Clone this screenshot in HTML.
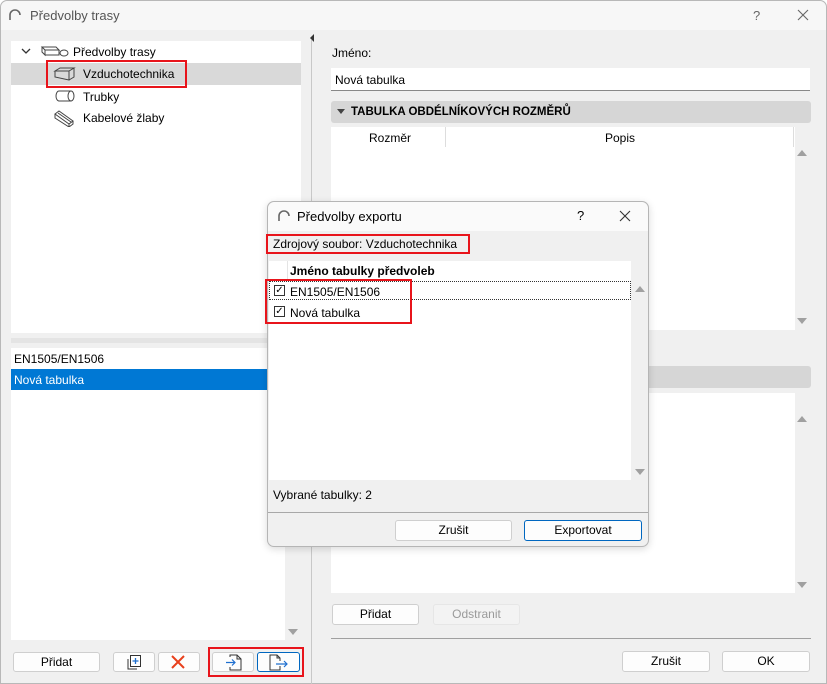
<!DOCTYPE html><html><head><meta charset="utf-8"><style>
*{box-sizing:border-box;margin:0;padding:0}
body{width:827px;height:684px;overflow:hidden;background:#fff;font-family:"Liberation Sans","DejaVu Sans",sans-serif;font-size:12px;color:#000;position:relative}
.a{position:absolute}
.win{left:0;top:0;width:827px;height:684px;background:#f0f0f0;border:1px solid #b8b8b8;border-radius:7px 7px 0 0}
.w{background:#fff}
.btn{position:absolute;background:#fdfdfd;border:1px solid #cfcfcf;border-radius:3px;text-align:center;font-size:12px;line-height:18px}
.red{position:absolute;border:2px solid #e8141b}
.t{position:absolute;white-space:nowrap}
.tri{position:absolute;width:0;height:0;border-left:5px solid transparent;border-right:5px solid transparent}
.up{border-bottom:6px solid #a0a0a0}
.dn{border-top:6px solid #a0a0a0}
.cb{position:absolute;width:11px;height:11px;border:1px solid #333;background:#fff;font-size:10px;line-height:9px;text-align:center;font-weight:bold}
</style></head><body>
<div class="a win"></div>
<div class="a" style="left:1px;top:1px;width:825px;height:29px;background:#f7f7f7;border-radius:7px 7px 0 0"></div>
<svg class="a" style="left:8px;top:8px" width="14" height="14"><path d="M2 12 V7 A5 5 0 0 1 12 7" fill="none" stroke="#666" stroke-width="1.6"/></svg>
<div class="t" style="left:30px;top:8px;font-size:13px;color:#555">Předvolby trasy</div>
<div class="t" style="left:753px;top:8px;font-size:13px;color:#666">?</div>
<svg class="a" style="left:797px;top:9px" width="12" height="12"><path d="M1 1L11 11M11 1L1 11" stroke="#666" stroke-width="1.1"/></svg>

<!-- left tree -->
<div class="a w" style="left:11px;top:41px;width:290px;height:292px"></div>
<div class="a" style="left:11px;top:63px;width:290px;height:22px;background:#d9d9d9"></div>
<svg class="a" style="left:21px;top:46px" width="10" height="10"><path d="M1 3L5 7L9 3" fill="none" stroke="#333" stroke-width="1.3"/></svg>
<svg class="a" style="left:40px;top:43px" width="30" height="16"><path d="M2 4h14l3 3h-14zM2 4v5l3 3V7M19 7v5H5" fill="none" stroke="#444"/><ellipse cx="24" cy="10" rx="4" ry="3" fill="none" stroke="#444"/></svg>
<div class="t" style="left:73px;top:45px">Předvolby trasy</div>
<svg class="a" style="left:53px;top:66px" width="24" height="16"><path d="M2 5l5-3h14l-5 3zM2 5v6l14 3V5M16 14l5-3V2" fill="none" stroke="#444"/></svg>
<div class="t" style="left:83px;top:67px">Vzduchotechnika</div>
<div class="red" style="left:46px;top:60px;width:141px;height:28px"></div>
<svg class="a" style="left:53px;top:88px" width="24" height="16"><path d="M6 3h12M6 13h12M6 3a3 5 0 0 0 0 10" fill="none" stroke="#444"/><ellipse cx="18" cy="8" rx="3" ry="5" fill="none" stroke="#444"/></svg>
<div class="t" style="left:83px;top:90px">Trubky</div>
<svg class="a" style="left:53px;top:109px" width="24" height="18"><path d="M2 5l4-3 14 10-4 3zM2 5v4l14 9v-3M20 12v3l-4 3M5 4l13 9" fill="none" stroke="#444"/></svg>
<div class="t" style="left:83px;top:111px">Kabelové žlaby</div>

<!-- splitter -->
<div class="a" style="left:11px;top:338px;width:290px;height:5px;background:#e4e4e4"></div>
<div class="a" style="left:311px;top:40px;width:1px;height:644px;background:#c8c8c8"></div>
<div class="tri" style="left:310px;top:34px;border:none;border-top:4px solid transparent;border-bottom:4px solid transparent;border-right:4px solid #333"></div>

<!-- left list -->
<div class="a w" style="left:11px;top:348px;width:274px;height:292px"></div>
<div class="t" style="left:14px;top:352px">EN1505/EN1506</div>
<div class="a" style="left:11px;top:369px;width:274px;height:21px;background:#0078d4"></div>
<div class="t" style="left:14px;top:373px;color:#fff">Nová tabulka</div>
<div class="tri dn" style="left:288px;top:629px"></div>

<div class="btn" style="left:13px;top:652px;width:87px;height:20px">Přidat</div>
<div class="btn" style="left:113px;top:652px;width:42px;height:20px"></div>
<svg class="a" style="left:126px;top:653px" width="16" height="18"><path d="M2 6v10h9" fill="none" stroke="#333"/><rect x="4.5" y="2.5" width="10" height="11" fill="#fff" stroke="#333"/><path d="M9.5 5v6M6.5 8h6" stroke="#1e6fd0" stroke-width="1.3"/></svg>
<div class="btn" style="left:158px;top:652px;width:42px;height:20px"></div>
<svg class="a" style="left:171px;top:655px" width="14" height="14"><path d="M1 1L13 13M13 1L1 13" stroke="#e8401c" stroke-width="2"/></svg>
<div class="btn" style="left:212px;top:652px;width:42px;height:20px"></div>
<svg class="a" style="left:225px;top:653px" width="18" height="18"><path d="M5 4V2h7l4 4v11H5v-3M12 2v4h4" fill="none" stroke="#333"/><path d="M1 9.5h9M7 6.5l3 3-3 3" fill="none" stroke="#1e6fd0" stroke-width="1.2"/></svg>
<div class="btn" style="left:257px;top:652px;width:43px;height:20px;border-color:#0067c0"></div>
<svg class="a" style="left:268px;top:653px" width="22" height="18"><path d="M12 13v4H2V2h7l3 3v3M9 2v3h3" fill="none" stroke="#333"/><path d="M8 11h11M16 8l3 3-3 3" fill="none" stroke="#1e6fd0" stroke-width="1.2"/></svg>
<div class="red" style="left:208px;top:647px;width:96px;height:30px"></div>

<!-- right -->
<div class="t" style="left:332px;top:46px">Jméno:</div>
<div class="a w" style="left:331px;top:68px;width:479px;height:23px;border-bottom:1px solid #888"></div>
<div class="t" style="left:335px;top:73px">Nová tabulka</div>
<div class="a" style="left:331px;top:101px;width:480px;height:22px;background:#d6d6d6;border-radius:3px"></div>
<div class="tri" style="left:337px;top:109px;border-left-width:4px;border-right-width:4px;border-top:5px solid #444"></div>
<div class="t" style="left:351px;top:106px;font-weight:bold;font-size:11.5px">TABULKA OBDÉLNÍKOVÝCH ROZMĚRŮ</div>
<div class="a w" style="left:331px;top:127px;width:464px;height:203px"></div>
<div class="a" style="left:445px;top:127px;width:1px;height:20px;background:#ddd"></div>
<div class="a" style="left:793px;top:127px;width:1px;height:20px;background:#ddd"></div>
<div class="t" style="left:369px;top:131px">Rozměr</div>
<div class="t" style="left:605px;top:131px">Popis</div>
<div class="tri up" style="left:797px;top:150px"></div>
<div class="tri dn" style="left:797px;top:318px"></div>
<div class="a" style="left:331px;top:366px;width:480px;height:22px;background:#d6d6d6;border-radius:3px"></div>
<div class="a w" style="left:331px;top:393px;width:464px;height:200px"></div>
<div class="tri up" style="left:797px;top:416px"></div>
<div class="tri dn" style="left:797px;top:582px"></div>
<div class="btn" style="left:332px;top:604px;width:87px;height:21px">Přidat</div>
<div class="btn" style="left:433px;top:604px;width:87px;height:21px;color:#9a9a9a;border-color:#e6e6e6;background:#f3f3f3">Odstranit</div>
<div class="a" style="left:331px;top:638px;width:480px;height:1px;background:#a0a0a0"></div>
<div class="btn" style="left:622px;top:651px;width:88px;height:21px">Zrušit</div>
<div class="btn" style="left:722px;top:651px;width:88px;height:21px">OK</div>

<!-- modal -->
<div class="a" style="left:267px;top:201px;width:382px;height:346px;background:#f0f0f0;border:1px solid #b5b5b5;border-radius:7px;box-shadow:0 2px 8px rgba(0,0,0,.15)"></div>
<div class="a" style="left:268px;top:202px;width:380px;height:29px;background:#fafafa;border-radius:7px 7px 0 0"></div>
<svg class="a" style="left:277px;top:209px" width="14" height="14"><path d="M2 12 V7 A5 5 0 0 1 12 7" fill="none" stroke="#666" stroke-width="1.6"/></svg>
<div class="t" style="left:297px;top:209px;font-size:13px">Předvolby exportu</div>
<div class="t" style="left:577px;top:208px;font-size:13px">?</div>
<svg class="a" style="left:619px;top:210px" width="12" height="12"><path d="M1 1L11 11M11 1L1 11" stroke="#333" stroke-width="1.1"/></svg>
<div class="t" style="left:273px;top:237px">Zdrojový soubor: Vzduchotechnika</div>
<div class="red" style="left:266px;top:234px;width:204px;height:20px"></div>
<div class="a w" style="left:269px;top:261px;width:362px;height:219px"></div>
<div class="a" style="left:287px;top:261px;width:1px;height:18px;background:#e4e4e4"></div>
<div class="t" style="left:290px;top:264px;font-weight:bold">Jméno tabulky předvoleb</div>
<div class="a" style="left:269px;top:281px;width:362px;height:19px;border:1px dotted #333"></div>
<div class="cb" style="left:274px;top:285px">✓</div>
<div class="t" style="left:290px;top:285px">EN1505/EN1506</div>
<div class="cb" style="left:274px;top:306px">✓</div>
<div class="t" style="left:290px;top:306px">Nová tabulka</div>
<div class="red" style="left:265px;top:279px;width:147px;height:45px"></div>
<div class="tri up" style="left:635px;top:286px"></div>
<div class="tri dn" style="left:635px;top:469px"></div>
<div class="t" style="left:273px;top:488px">Vybrané tabulky: 2</div>
<div class="a" style="left:268px;top:512px;width:380px;height:1px;background:#a8a8a8"></div>
<div class="btn" style="left:395px;top:520px;width:117px;height:21px">Zrušit</div>
<div class="btn" style="left:524px;top:520px;width:118px;height:21px;border-color:#0067c0">Exportovat</div>
</body></html>
